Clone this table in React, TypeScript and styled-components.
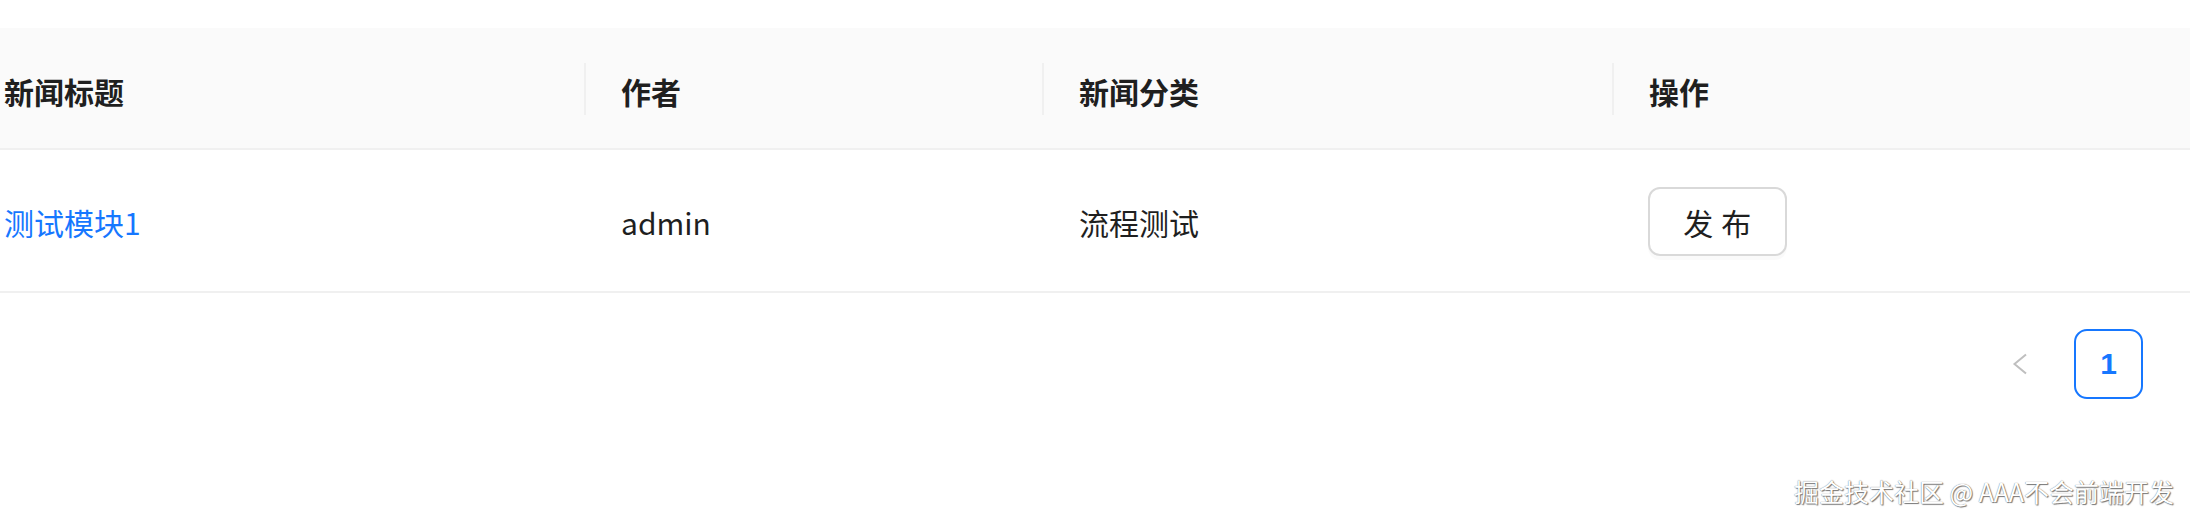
import React from 'react'
import styled, { createGlobalStyle } from 'styled-components'

const GlobalStyle = createGlobalStyle`
    html, body {
        margin: 0;
        padding: 0;
        background: #ffffff;
    }
    body {
        font-family: "Noto Sans CJK SC", "Noto Sans", sans-serif;
        color: rgba(0, 0, 0, 0.88);
    }
`

const Page = styled.div`
    position: relative;
    width: 2190px;
    height: 522px;
    padding-top: 28px;
    box-sizing: border-box;
    overflow: hidden;
`

const Table = styled.div`
    display: grid;
    grid-template-columns: 585px 458px 570px 1fr;
`

const HeadCell = styled.div<{ $first?: boolean }>`
    position: relative;
    display: flex;
    align-items: center;
    height: 122px;
    padding-left: ${(p) => (p.$first ? '4px' : '36px')};
    padding-top: 6px;
    box-sizing: border-box;
    background: #fafafa;
    border-bottom: 2px solid #f0f0f0;
    font-size: 30px;
    line-height: 40px;
    font-weight: 700;
    color: #1f1f1f;

    &::before {
        content: '';
        display: ${(p) => (p.$first ? 'none' : 'block')};
        position: absolute;
        left: -1px;
        top: 35px;
        width: 2px;
        height: 52px;
        background: #f0f0f0;
    }
`

const BodyCell = styled.div<{ $first?: boolean }>`
    display: flex;
    align-items: center;
    height: 143px;
    padding-left: ${(p) => (p.$first ? '4px' : '36px')};
    padding-top: 2px;
    box-sizing: border-box;
    border-bottom: 2px solid #f0f0f0;
    font-size: 30px;
    line-height: 40px;
    color: #1f1f1f;
`

const Link = styled.a`
    color: #1677ff;
    text-decoration: none;
    cursor: pointer;
`

const Button = styled.button`
    width: 139px;
    height: 69px;
    margin-left: -1px;
    padding: 0;
    background: #ffffff;
    border: 2px solid #d9d9d9;
    border-radius: 12px;
    box-shadow: 0 4px 0 rgba(0, 0, 0, 0.02);
    font-family: inherit;
    font-size: 30px;
    line-height: 40px;
    color: #1f1f1f;
    letter-spacing: 0.02em;
    cursor: pointer;
`

const Pager = styled.ul`
    display: flex;
    justify-content: flex-end;
    align-items: center;
    gap: 20px;
    list-style: none;
    margin: 36px 47px 0 0;
    padding: 0;
`

const PageItem = styled.li<{ $active?: boolean }>`
    display: flex;
    align-items: center;
    justify-content: center;
    width: 69px;
    height: 70px;
    box-sizing: border-box;
    border: 2px solid ${(p) => (p.$active ? '#1677ff' : 'transparent')};
    border-radius: 13px;
    font-family: "Liberation Sans", Arial, sans-serif;
    font-size: 30px;
    font-weight: 700;
    color: ${(p) => (p.$active ? '#1677ff' : 'rgba(0, 0, 0, 0.25)')};
`

const Watermark = styled.div`
    position: absolute;
    right: 16px;
    bottom: 16px;
    font-size: 25px;
    line-height: 30px;
    color: #ffffff;
    text-shadow: 0 0 1px #5a5a5a, 1px 1px 1px #7a7a7a;
    letter-spacing: 0;
`

const columns = ['新闻标题', '作者', '新闻分类', '操作']

const rows = [{ id: 1, title: '测试模块1', author: 'admin', category: '流程测试' }]

export default function App(): JSX.Element {
    return (
        <Page>
            <GlobalStyle />
            <Table>
                {columns.map((col, i) => (
                    <HeadCell key={col} $first={i === 0}>
                        {col}
                    </HeadCell>
                ))}
                {rows.map((row) => (
                    <React.Fragment key={row.id}>
                        <BodyCell $first>
                            <Link>{row.title}</Link>
                        </BodyCell>
                        <BodyCell>{row.author}</BodyCell>
                        <BodyCell>{row.category}</BodyCell>
                        <BodyCell>
                            <Button>发 布</Button>
                        </BodyCell>
                    </React.Fragment>
                ))}
            </Table>
            <Pager>
                <PageItem>
                    <svg width="16" height="22" viewBox="0 0 16 22" fill="none">
                        <path d="M14 1.5 L2.5 11 L14 20.5" stroke="#bfbfbf" strokeWidth="2" strokeLinejoin="miter" />
                    </svg>
                </PageItem>
                <PageItem $active>1</PageItem>
            </Pager>
            <Watermark>掘金技术社区 @ AAA不会前端开发</Watermark>
        </Page>
    )
}
